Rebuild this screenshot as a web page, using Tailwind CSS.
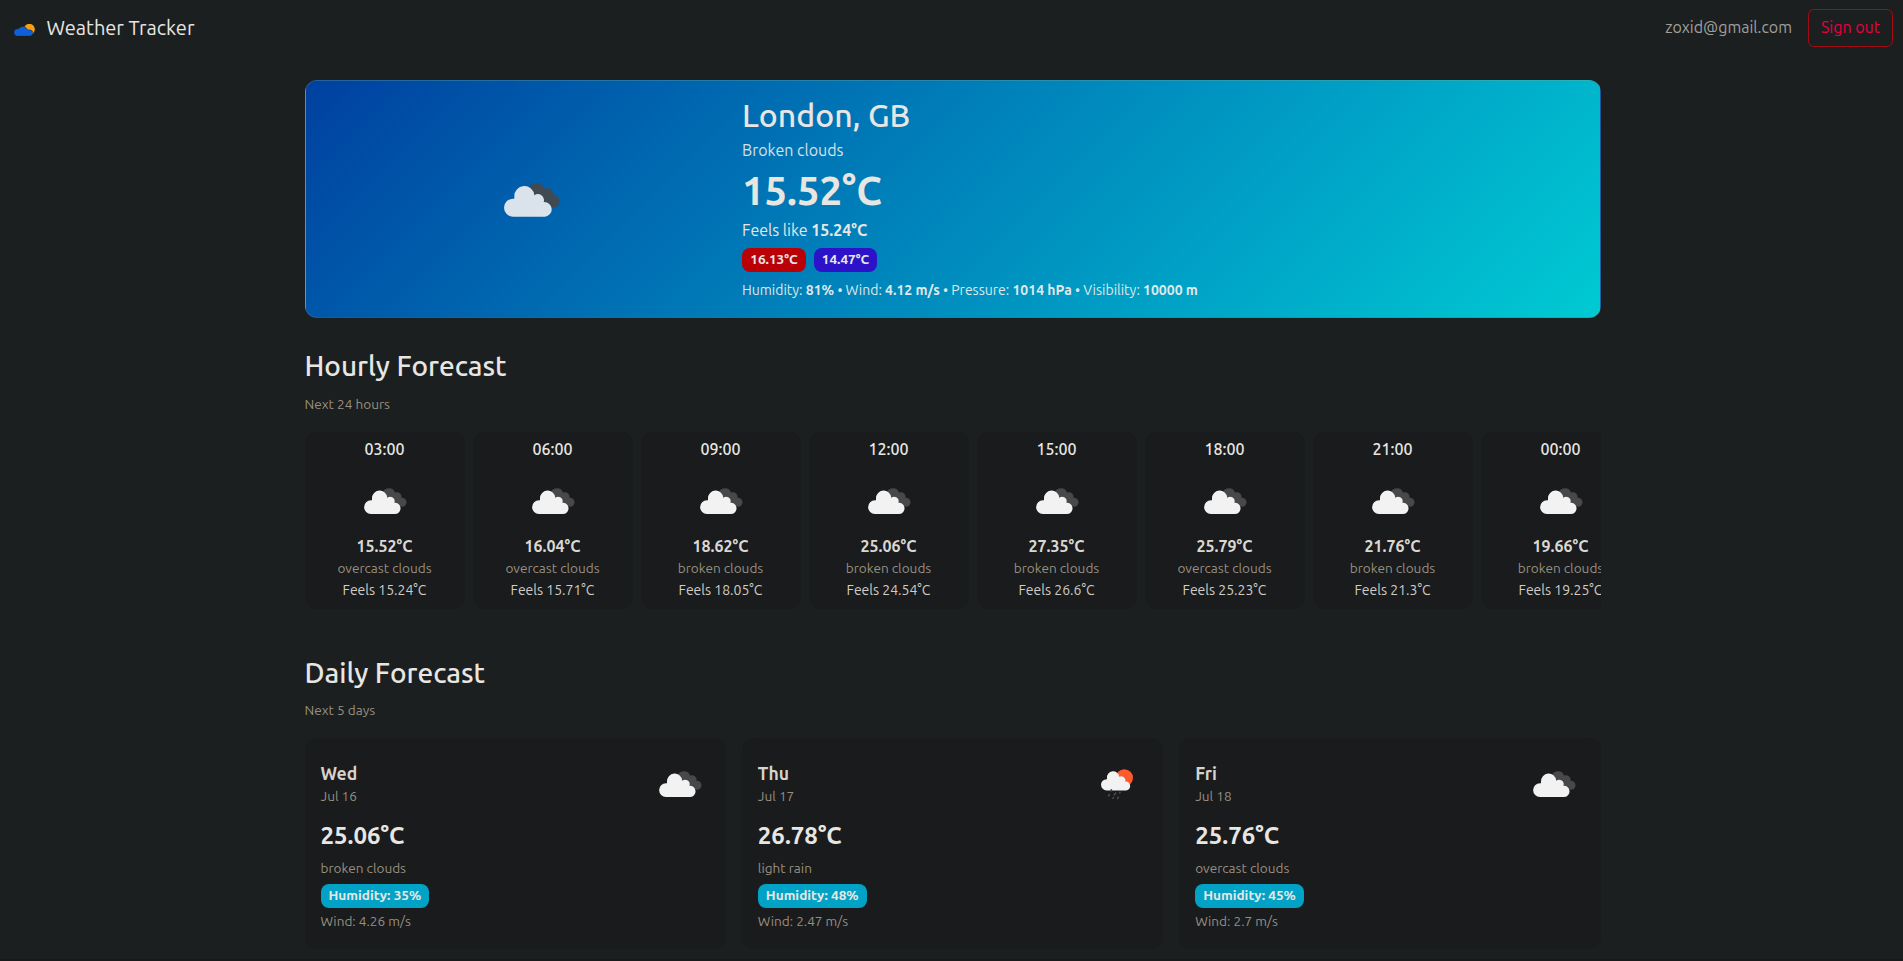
<!DOCTYPE html>
<html lang="en">
<head>
<meta charset="utf-8">
<title>Weather Tracker</title>
<script src="https://cdn.jsdelivr.net/npm/@tailwindcss/browser@4"></script>
</head>
<body class="h-[961px] overflow-hidden bg-[#1b1f20] font-['Ubuntu','Noto_Sans',sans-serif] text-[#e8e6e3]">
<svg class="hidden">
  <symbol id="clouds" viewBox="0 0 168 106">
    <path fill="#48484a" d="M72 26a26 26 0 0 1 50-4a18 18 0 0 1 25 20a18 18 0 0 1 3 36L100 70Z"/>
    <path fill="#f2f2f2" d="M27 106a27 27 0 0 1 0-54h4V46a30 30 0 0 1 60-4a18 18 0 0 1 28 20a22 22 0 0 1 4 44Z"/>
  </symbol>
  <symbol id="rain" viewBox="0 0 96 92">
    <circle cx="70" cy="26" r="26" fill="#ff5a2b"/>
    <path fill="#f2f2f2" d="M17 64a17 17 0 0 1 0-34h1V27a18.500 18.500 0 0 1 37-4a12.500 12.500 0 0 1 18 14a13.500 13.500 0 0 1 2 27Z"/>
    <g stroke="#4c4c4e" stroke-width="5" stroke-linecap="round"><path d="M31 62l-1 3M25 76l-2 4M41 75l-1 2M57 69l-1 2M37 85l-1 2M44 72v1M52 84l-2 4"/></g>
  </symbol>
</svg>

<div class="flex h-[959px] flex-col">
  <nav class="flex h-14 items-center justify-between pr-2.5 pl-3.5">
    <div class="flex items-center gap-[11.500px]">
      <svg class="mt-1 h-3 w-[21px]" viewBox="0 0 63 36"><circle cx="46" cy="16" r="16.500" fill="#ff9f0a"/><path fill="#0f5fd8" stroke="#1b1f20" stroke-width="1" d="M11 36.500a11 11 0 0 1 0-22h3a15 15 0 0 1 27 3h6a9.500 9.500 0 0 1 0 19Z"/></svg>
      <span class="text-xl leading-[30px]">Weather Tracker</span>
    </div>
    <div class="flex items-center gap-4">
      <span class="pb-[3px] text-base leading-6 text-[#a09f9c]">zoxid@gmail.com</span>
      <button class="flex h-[38px] w-[85px] items-center justify-center rounded-md border border-[#a20a14] pb-[3px] text-base leading-6 text-[#e8003f]">Sign out</button>
    </div>
  </nav>

  <main class="ml-[304.500px] w-[1296px] pt-6">
    <section class="flex h-[238px] rounded-xl border border-[#7a8084]/30 bg-linear-135 from-[#0040a0] to-[#00cad3] text-[#e8e6e3]">
      <div class="w-[436.500px] pt-[100px] pl-[198.500px]"><svg class="h-9 w-14 opacity-90"><use href="#clouds"/></svg></div>
      <div class="flex flex-col items-start pt-[15px]">
        <h1 class="text-[32px] leading-[38px] font-medium">London, GB</h1>
        <p class="mt-1 text-base leading-6 text-[#d6e1e6]">Broken clouds</p>
        <p class="mt-[5px] text-[40px] leading-[48px] font-semibold">15.52°C</p>
        <p class="mt-[3px] text-base leading-6">Feels like <strong class="font-semibold">15.24°C</strong></p>
        <div class="mt-1.5 flex gap-2 text-[13.600px] leading-[23px] font-bold">
          <span class="h-6 w-16 rounded-lg bg-[#b90007] text-center">16.13°C</span>
          <span class="h-6 w-[63px] rounded-lg bg-[#2c12c8] text-center">14.47°C</span>
        </div>
        <p class="mt-2 text-sm leading-[21px] text-[#dfe8ea]">Humidity: <strong class="font-semibold">81%</strong> • Wind: <strong class="font-semibold">4.12 m/s</strong> • Pressure: <strong class="font-semibold">1014 hPa</strong> • Visibility: <strong class="font-semibold">10000 m</strong></p>
      </div>
    </section>

    <section class="pt-[31px]">
      <h2 class="text-[28px] leading-[34px] font-medium">Hourly Forecast</h2>
      <p class="mt-[11px] text-[13.600px] leading-5 text-[#988f81]">Next 24 hours</p>
      <div id="hours" class="mt-[18px] flex gap-2 overflow-hidden"></div>
    </section>

    <section class="pt-[47px]">
      <h2 class="text-[28px] leading-[34px] font-medium">Daily Forecast</h2>
      <p class="mt-2.5 text-[13.600px] leading-5 text-[#988f81]">Next 5 days</p>
      <div id="days" class="mt-[18px] grid grid-cols-3 gap-4"></div>
    </section>
  </main>
</div>
<div class="h-0.5 bg-[#17191a]"></div>

<script>
const hours = [
  ["03:00", "15.52", "overcast clouds", "15.24"], ["06:00", "16.04", "overcast clouds", "15.71"],
  ["09:00", "18.62", "broken clouds", "18.05"], ["12:00", "25.06", "broken clouds", "24.54"],
  ["15:00", "27.35", "broken clouds", "26.6"], ["18:00", "25.79", "overcast clouds", "25.23"],
  ["21:00", "21.76", "broken clouds", "21.3"], ["00:00", "19.66", "broken clouds", "19.25"]];
document.getElementById("hours").innerHTML = hours.map(([time, temp, sky, feels]) => `
  <article class="flex h-[177px] w-40 shrink-0 flex-col items-center rounded-xl bg-[#191b1c] pt-[5px]">
    <p class="text-base leading-6 font-medium">${time}</p>
    <svg class="mt-[26px] mb-5 ml-[2px] h-[27px] w-[43px]"><use href="#clouds"/></svg>
    <p class="text-base leading-6 font-semibold text-[#dad7d2]">${temp}°C</p>
    <p class="text-[13.600px] leading-5 text-[#988f81]">${sky}</p>
    <p class="mt-0.5 text-sm leading-[21px] text-[#cfccc7]">Feels ${feels}°C</p>
  </article>`).join("");

const days = [
  ["Wed", "Jul 16", "25.06", "broken clouds", 35, "4.26", `<svg class="mt-px mr-2 h-[27px] w-[43px]"><use href="#clouds"/></svg>`],
  ["Thu", "Jul 17", "26.78", "light rain", 48, "2.47", `<svg class="mr-3.5 h-[31px] w-8"><use href="#rain"/></svg>`],
  ["Fri", "Jul 18", "25.76", "overcast clouds", 45, "2.7", `<svg class="mt-px mr-[9px] h-[27px] w-[43px]"><use href="#clouds"/></svg>`]];
document.getElementById("days").innerHTML = days.map(([day, date, temp, sky, humidity, wind, icon]) => `
  <article class="flex h-[211px] flex-col items-start rounded-xl bg-[#191b1c] px-4 pt-[23px]">
    <div class="flex w-full items-start justify-between">
      <div>
        <p class="text-[17.600px] leading-[25px] font-semibold text-[#d6d2cc]">${day}</p>
        <p class="text-[13.600px] leading-5 text-[#988f81]">${date}</p>
      </div>
      <div class="pt-2">${icon}</div>
    </div>
    <p class="mt-4 text-2xl leading-[28px] font-semibold">${temp}°C</p>
    <p class="mt-2 text-[13.600px] leading-5 text-[#988f81]">${sky}</p>
    <p class="mt-1.5 h-6 rounded-lg bg-[#01a2c6] px-2 text-[13.600px] leading-[23px] font-bold">Humidity: ${humidity}%</p>
    <p class="mt-[3px] text-[13.600px] leading-5 text-[#988f81]">Wind: ${wind} m/s</p>
  </article>`).join("");
</script>
</body>
</html>
